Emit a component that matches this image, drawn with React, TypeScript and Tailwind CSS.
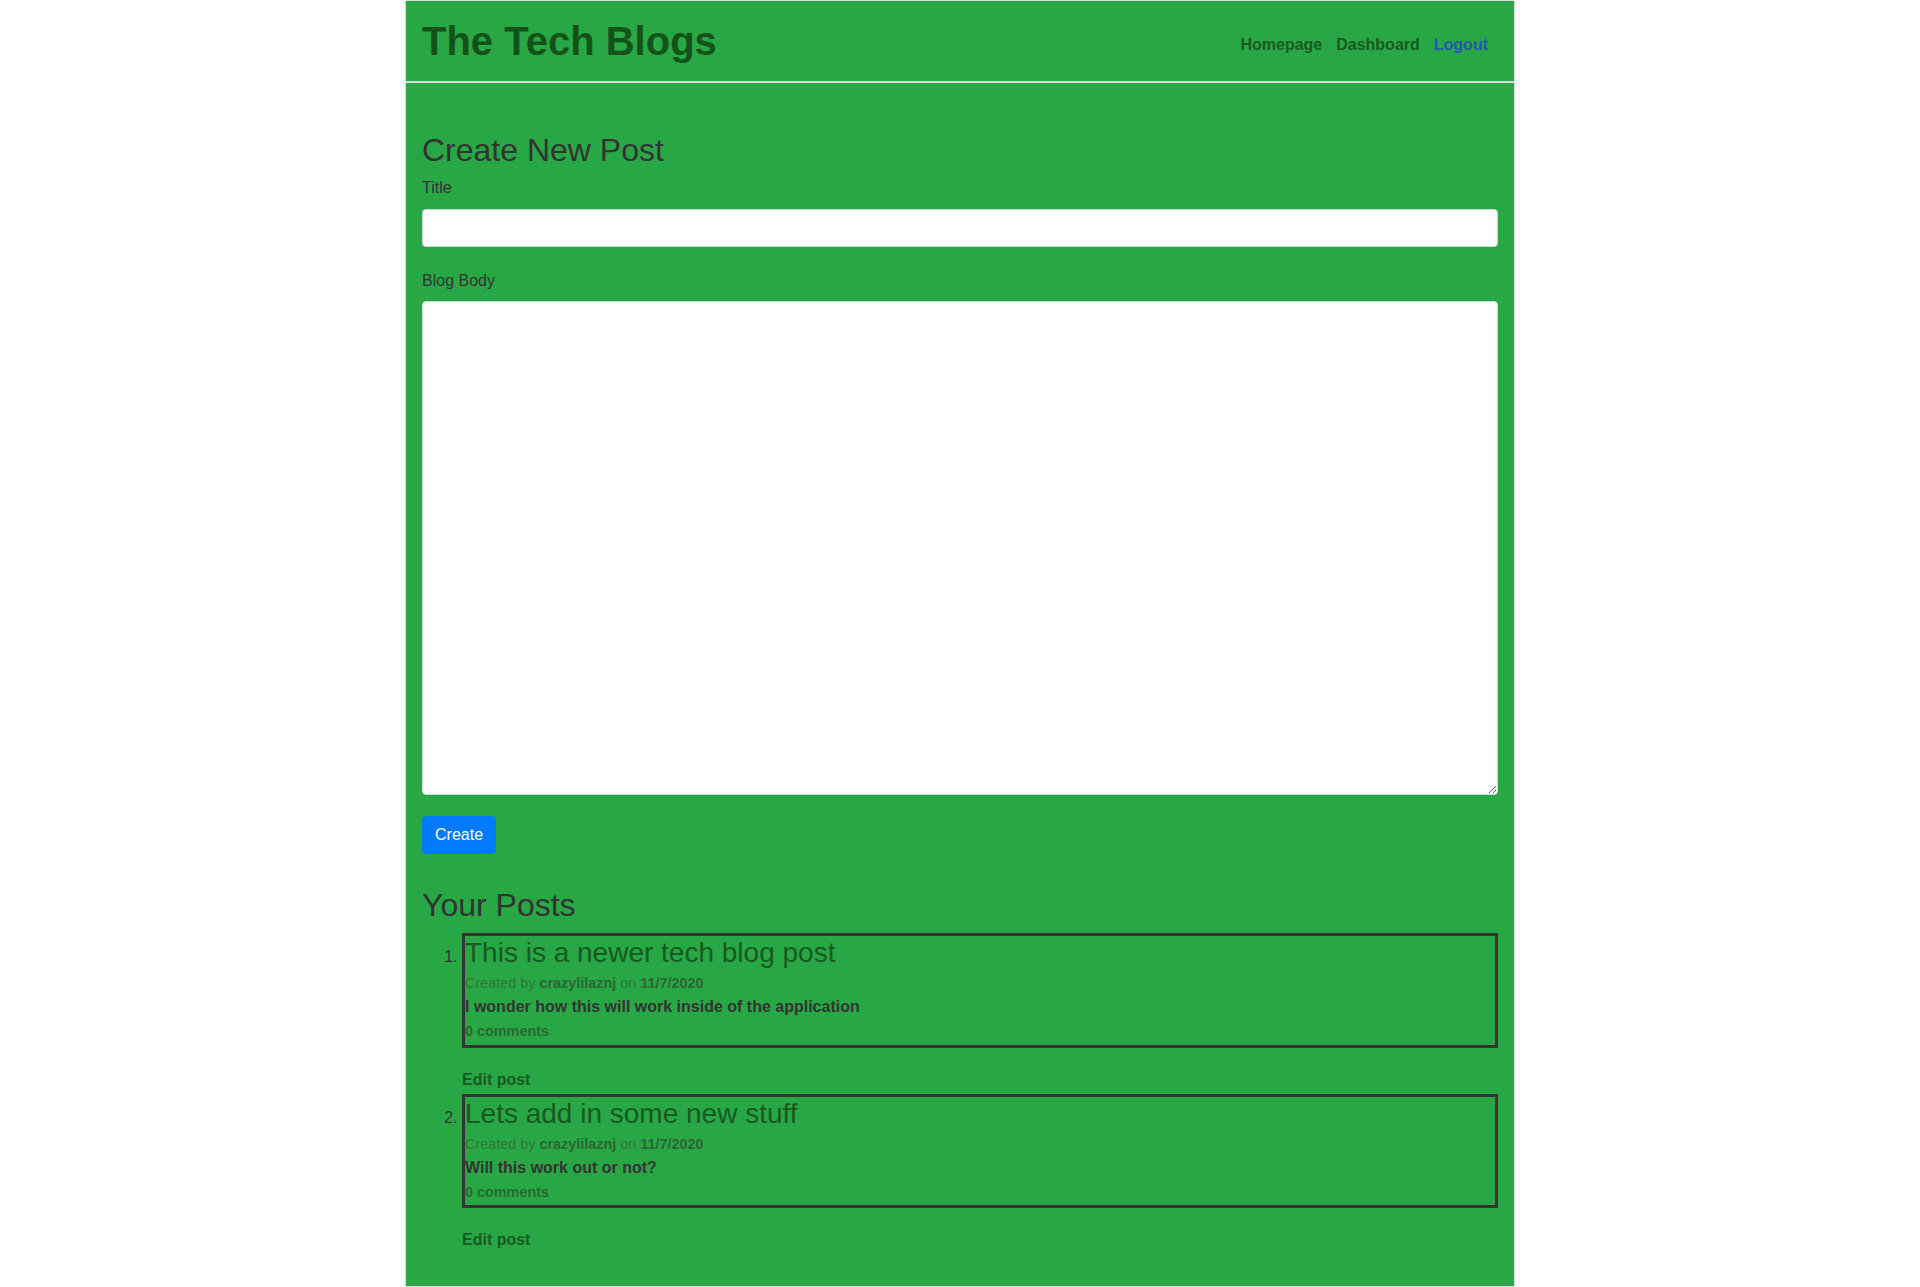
import React from 'react';

type Post = {
  id: number;
  title: string;
  author: string;
  date: string;
  body: string;
  comments: number;
};

const posts: Post[] = [
  {
    id: 1,
    title: 'This is a newer tech blog post',
    author: 'crazylilaznj',
    date: '11/7/2020',
    body: 'I wonder how this will work inside of the application',
    comments: 0,
  },
  {
    id: 2,
    title: 'Lets add in some new stuff',
    author: 'crazylilaznj',
    date: '11/7/2020',
    body: 'Will this work out or not?',
    comments: 0,
  },
];

export default function App() {
  return (
    <div className="bg-white font-['Liberation_Sans',Arial,sans-serif] text-[#333]">
      <div className="mx-auto w-[1110px] min-h-screen border border-[#dcdcdc] bg-[#28a745]">
        {/* header */}
        <header className="flex h-[82px] items-start justify-between border-b-2 border-[#dcdcdc] pl-4 pr-4">
          <h1 className="pt-[16px] text-[40px] font-bold leading-[48px] text-[#145219]">
            The Tech Blogs
          </h1>
          <nav className="flex pt-[32px] pr-[3px] text-[16px] font-bold leading-[24px]">
            <a className="px-[7px] text-[#185a1f]">Homepage</a>
            <a className="px-[7px] text-[#185a1f]">Dashboard</a>
            <a className="px-[7px] text-[#2257b6]">Logout</a>
          </nav>
        </header>

        <main className="px-4 pb-8">
          {/* new post form */}
          <h2 className="mt-[48px] mb-[7px] text-[32px] leading-[38.4px]">Create New Post</h2>
          <label className="block mb-[9px] text-[16px] leading-[24px]">Title</label>
          <input
            type="text"
            className="block h-[38px] w-full rounded-[4px] border border-[#ced4da] bg-white px-3"
          />
          <label className="block mt-[22px] mb-2 text-[16px] leading-[24px]">Blog Body</label>
          <textarea className="block h-[494px] w-full rounded-[4px] border border-[#ced4da] bg-white px-3 py-1.5" />
          <button className="mt-[21px] h-[38px] rounded-[4px] border border-[#007bff] bg-[#007bff] px-3 text-[16px] leading-[24px] text-white">
            Create
          </button>

          {/* posts list */}
          <h2 className="mt-8 mb-2 text-[32px] leading-[38.4px]">Your Posts</h2>
          <ol className="list-decimal pl-10 text-[16px] marker:text-[#333]">
            {posts.map((post, index) => (
              <li key={post.id} className={index > 0 ? 'mt-[2px]' : ''}>
                <div className="border-[3px] border-[#333] pb-[2px]">
                  <h3 className="text-[28px] leading-[33.6px] text-[#175a20]">{post.title}</h3>
                  <p className="mt-[4px] text-[14.4px] leading-[21.6px] text-[#2f7a38]">
                    Created by <span className="font-bold text-[#2e6534]">{post.author}</span> on{' '}
                    <span className="font-bold text-[#2e6534]">{post.date}</span>
                  </p>
                  <p className="text-[16px] font-bold leading-[24px] text-[#333]">{post.body}</p>
                  <p className="mt-[2px] text-[14.4px] font-bold leading-[21.6px] text-[#276a31]">
                    {post.comments} comments
                  </p>
                </div>
                <a className="mt-5 block text-[16px] font-bold leading-[24px] text-[#185a1f]">Edit post</a>
              </li>
            ))}
          </ol>
        </main>
      </div>
    </div>
  );
}
